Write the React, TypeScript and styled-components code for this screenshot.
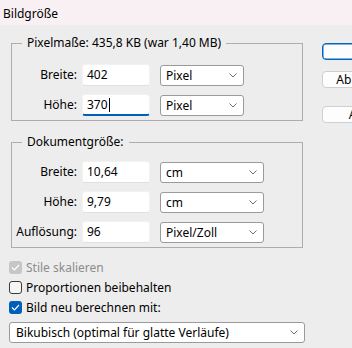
import styled, { createGlobalStyle } from "styled-components";

const GlobalStyle = createGlobalStyle`
  html, body {
    margin: 0;
    padding: 0;
    background: #ededed;
    overflow: hidden;
  }
  body {
    font-family: "Noto Sans", "Open Sans", sans-serif;
    font-size: 12px;
    color: #000;
  }
`;

const Dialog = styled.div`
  width: 352px;
  height: 348px;
  overflow: hidden;
  background: #ededed;
`;

const TitleBar = styled.div`
  height: 25px;
  box-sizing: border-box;
  padding: 1px 0 0 3px;
  display: flex;
  align-items: center;
  background: #f9f0f4;
  font-size: 12px;
`;

const Body = styled.div`
  display: flex;
  padding: 10px 0 0 9px;
`;

const LeftColumn = styled.div`
  width: 296px;
  flex: none;
  display: flex;
  flex-direction: column;
`;

const Group = styled.fieldset<{ $top: number; $gapAbove?: number }>`
  margin: ${(p) => p.$gapAbove ?? 0}px 2px 0 2px;
  padding: ${(p) => p.$top}px 0 4px 0;
  border: 1px solid #adadad;
  min-width: 0;
`;

const Legend = styled.legend`
  margin-left: 10px;
  padding: 0 5px;
  line-height: 16px;
  font-size: 12px;
`;

const FieldGrid = styled.div<{ $selectWidth: number }>`
  display: grid;
  grid-template-columns: 65px 68px ${(p) => p.$selectWidth + 5}px;
  column-gap: 5px;
  row-gap: 8px;
  align-items: center;
  & > :nth-child(3n) {
    margin-left: 5px;
  }
`;

const Label = styled.span`
  text-align: right;
  white-space: nowrap;
  line-height: 22px;
`;

const TextBox = styled.div<{ $focused?: boolean }>`
  height: 22px;
  box-sizing: border-box;
  background: #fff;
  border: 1px solid #f2f2f2;
  border-bottom: ${(p) => (p.$focused ? "2px solid #005fb8" : "1px solid #e0e0e0")};
  border-radius: 3px;
  padding: 0 0 0 4px;
  display: flex;
  align-items: center;
  line-height: 20px;
`;

const Caret = styled.span`
  display: inline-block;
  width: 1px;
  height: 14px;
  background: #000;
  margin-left: 1px;
`;

const Select = styled.div<{ $height?: number }>`
  height: ${(p) => p.$height ?? 21}px;
  box-sizing: border-box;
  background: #fff;
  border: 1px solid #9a9a9a;
  border-radius: 3px;
  display: flex;
  align-items: center;
  justify-content: space-between;
  padding: 0 6px 0 5px;
  white-space: nowrap;
`;

const Chevron = () => (
  <svg width="8" height="5" viewBox="0 0 8 5">
    <path d="M0.5 0.5 L4 4 L7.5 0.5" fill="none" stroke="#6f6f6f" strokeWidth="1" />
  </svg>
);

const CheckList = styled.div`
  margin-top: 9px;
  display: flex;
  flex-direction: column;
`;

const CheckRow = styled.div<{ $disabled?: boolean }>`
  height: 20px;
  display: flex;
  align-items: center;
  gap: 4px;
  color: ${(p) => (p.$disabled ? "#8c8c8c" : "#000")};
`;

const Box = styled.span<{ $state: "on" | "off" | "disabled" }>`
  width: 13px;
  height: 13px;
  box-sizing: border-box;
  border-radius: 3px;
  display: flex;
  align-items: center;
  justify-content: center;
  background: ${(p) =>
    p.$state === "on" ? "#005fb8" : p.$state === "disabled" ? "#c6c6c6" : "#f6f6f6"};
  border: ${(p) => (p.$state === "off" ? "1px solid #3a3a3a" : "none")};
`;

const Tick = () => (
  <svg width="9" height="7" viewBox="0 0 9 7">
    <path d="M1 3.5 L3.5 6 L8 1" fill="none" stroke="#fff" strokeWidth="1.2" />
  </svg>
);

const Resample = styled(Select)`
  margin-top: 5px;
  padding-left: 6px;
`;

const ButtonColumn = styled.div`
  margin-left: 17px;
  padding-top: 8px;
  display: flex;
  flex-direction: column;
  flex: none;
`;

const Button = styled.div<{ $primary?: boolean; $gap?: number }>`
  width: 90px;
  height: 17px;
  box-sizing: border-box;
  margin-top: ${(p) => p.$gap ?? 0}px;
  background: #fdfdfd;
  border: 1px solid ${(p) => (p.$primary ? "#0067c0" : "#cfcfcf")};
  box-shadow: ${(p) => (p.$primary ? "inset 0 0 0 0.5px #0067c0" : "none")};
  border-radius: 4px;
  display: flex;
  align-items: center;
  justify-content: center;
  line-height: 15px;
  white-space: nowrap;
`;

const pixelRows = [
  { label: "Breite:", value: "402", unit: "Pixel" },
  { label: "Höhe:", value: "370", unit: "Pixel", focused: true },
];

const docRows = [
  { label: "Breite:", value: "10,64", unit: "cm" },
  { label: "Höhe:", value: "9,79", unit: "cm" },
  { label: "Auflösung:", value: "96", unit: "Pixel/Zoll" },
];

const checks: { text: string; state: "on" | "off" | "disabled" }[] = [
  { text: "Stile skalieren", state: "disabled" },
  { text: "Proportionen beibehalten", state: "off" },
  { text: "Bild neu berechnen mit:", state: "on" },
];

export default function App() {
  return (
    <Dialog>
      <GlobalStyle />
      <TitleBar>Bildgröße</TitleBar>
      <Body>
        <LeftColumn>
          <Group $top={13}>
            <Legend>Pixelmaße: 435,8 KB (war 1,40 MB)</Legend>
            <FieldGrid $selectWidth={84}>
              {pixelRows.map((r) => [
                <Label key={r.label + "l"}>{r.label}</Label>,
                <TextBox key={r.label + "v"} $focused={r.focused}>
                  {r.value}
                  {r.focused && <Caret />}
                </TextBox>,
                <Select key={r.label + "u"}>
                  {r.unit}
                  <Chevron />
                </Select>,
              ])}
            </FieldGrid>
          </Group>
          <Group $top={11} $gapAbove={13}>
            <Legend>Dokumentgröße:</Legend>
            <FieldGrid $selectWidth={104}>
              {docRows.map((r) => [
                <Label key={r.label + "l"}>{r.label}</Label>,
                <TextBox key={r.label + "v"}>{r.value}</TextBox>,
                <Select key={r.label + "u"}>
                  {r.unit}
                  <Chevron />
                </Select>,
              ])}
            </FieldGrid>
          </Group>
          <CheckList>
            {checks.map((c) => (
              <CheckRow key={c.text} $disabled={c.state === "disabled"}>
                <Box $state={c.state}>{c.state !== "off" && <Tick />}</Box>
                {c.text}
              </CheckRow>
            ))}
          </CheckList>
          <Resample>
            Bikubisch (optimal für glatte Verläufe)
            <Chevron />
          </Resample>
        </LeftColumn>
        <ButtonColumn>
          <Button $primary>OK</Button>
          <Button $gap={11}>Abbrechen</Button>
          <Button $gap={18}>Auto...</Button>
        </ButtonColumn>
      </Body>
    </Dialog>
  );
}
